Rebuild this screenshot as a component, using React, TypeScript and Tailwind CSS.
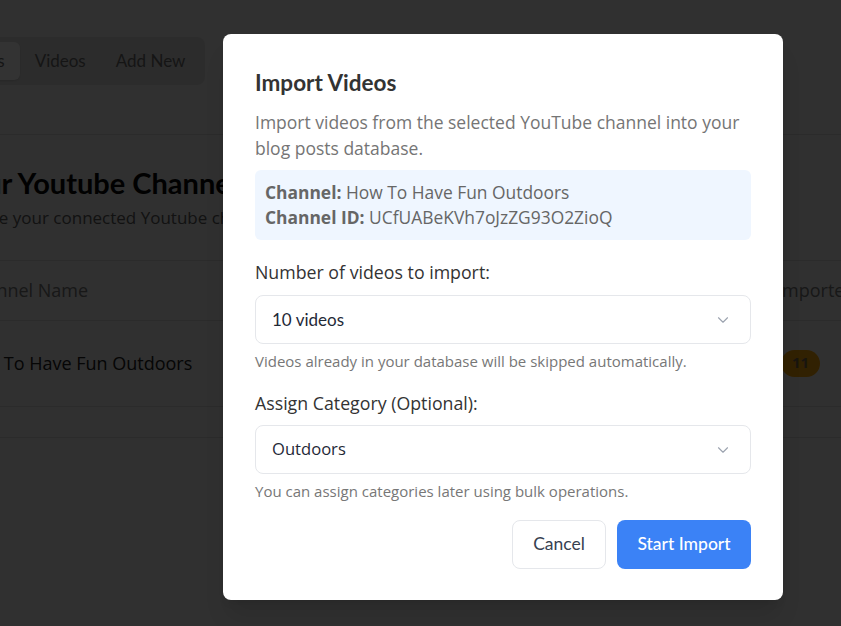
import { ChevronDown } from "lucide-react";

const lato = "font-['Lato','Liberation_Sans',sans-serif]";
const open = "font-['Open_Sans','Liberation_Sans',sans-serif]";

const tabs = ["Channels", "Videos", "Add New"];

const SelectBox = ({ value, className }: { value: string; className: string }) => (
  <div className="flex h-[49px] items-center justify-between rounded-lg border border-[#e5e7eb] bg-white pl-4 pr-[18px]">
    <span className={`text-[#1f2937] ${className}`}>{value}</span>
    <ChevronDown className="h-[18px] w-[18px] text-[#9ca3af]" strokeWidth={1.5} />
  </div>
);

export default function App() {
  return (
    <div className={`relative h-[626px] w-[841px] overflow-hidden bg-[#efefef] ${lato}`}>
      {/* page behind the dialog */}
      <div className="ml-[-84px] pt-[37px]">
        <div className="inline-flex rounded-lg bg-[#dcdcdc] p-[5px]">
          {tabs.map((tab, i) => (
            <div
              key={tab}
              className={`flex h-[38px] items-center rounded-md px-[15px] text-[17px] text-[#6b6b6b] ${
                i === 0 ? "bg-white shadow-sm" : ""
              }`}
            >
              {tab}
            </div>
          ))}
        </div>
      </div>
      <div className="mt-[49px] border-t border-[#d6d6d6]" />
      <div className="ml-[-52px] w-[1000px] pl-[5px] pt-[30px]">
        <h1 className="text-[29px] font-bold leading-9 text-[#050505]">Your Youtube Channels</h1>
        <p className={`ml-[-8px] mt-[4px] text-[17px] text-[#5a5a5a] ${open}`}>Manage your connected Youtube channels</p>
        <div className={`ml-[-5px] mt-[29px] border-t border-[#d6d6d6] ${open}`}>
          <div className="flex h-[60px] items-center border-b border-[#d6d6d6] text-lg text-[#777]">
            <div className="w-[829px] pl-[16px]">Channel Name</div>
            <div>Imported</div>
          </div>
          <div className="flex h-[86px] items-center border-b border-[#d6d6d6] text-lg text-[#202020]">
            <div className="w-[829px] pl-[13px]">How To Have Fun Outdoors</div>
            <div className="ml-[4px] flex h-[27px] w-[39px] items-center justify-center rounded-full bg-[#f5a40c] text-[15px] font-bold text-[#7a6a4a]">
              11
            </div>
          </div>
          <div className="h-[31px] border-b border-[#d6d6d6]" />
        </div>
      </div>

      {/* overlay + dialog */}
      <div className="absolute inset-0 bg-black/80">
        <div className="ml-[223px] mt-[34px] w-[560px] rounded-lg bg-white px-8 pb-[31px] pt-[29px] shadow-xl">
          <h2 className="text-[22.5px] font-bold leading-[40px] text-[#333]">Import Videos</h2>
          <p className={`mt-[6px] text-[17.5px] leading-[26px] text-[#757575] ${open}`}>
            Import videos from the selected YouTube channel into your blog posts database.
          </p>
          <div className={`mt-[9px] rounded-md bg-[#eff6ff] px-[10px] py-[10px] text-[17.4px] leading-[25px] text-[#666] ${open}`}>
            <div>
              <span className="font-bold">Channel:</span> How To Have Fun Outdoors
            </div>
            <div>
              <span className="font-bold">Channel ID:</span> UCfUABeKVh7oJzZG93O2ZioQ
            </div>
          </div>

          <div className={`mt-[18px] text-[17.75px] leading-[28px] text-[#333] ${open}`}>Number of videos to import:</div>
          <div className="mt-[9px]">
            <SelectBox value="10 videos" className={`text-[17px] ${lato}`} />
          </div>
          <p className={`mt-[7px] text-[15px] leading-5 text-[#777] ${open}`}>
            Videos already in your database will be skipped automatically.
          </p>

          <div className={`mt-[18px] text-[17.75px] leading-[28px] text-[#333] ${open}`}>Assign Category (Optional):</div>
          <div className="mt-[8px]">
            <SelectBox value="Outdoors" className={`text-[16.6px] ${open}`} />
          </div>
          <p className={`mt-[7px] text-[15px] leading-5 text-[#777] ${open}`}>
            You can assign categories later using bulk operations.
          </p>

          <div className="mt-[19px] flex justify-end gap-[11px]">
            <button className="h-[49px] w-[94px] rounded-lg border border-[#e5e7eb] bg-white text-[17.5px] text-[#374151]">
              Cancel
            </button>
            <button className="h-[49px] w-[134px] rounded-lg bg-[#3b82f6] text-[17.5px] font-medium text-white">
              Start Import
            </button>
          </div>
        </div>
      </div>
    </div>
  );
}
